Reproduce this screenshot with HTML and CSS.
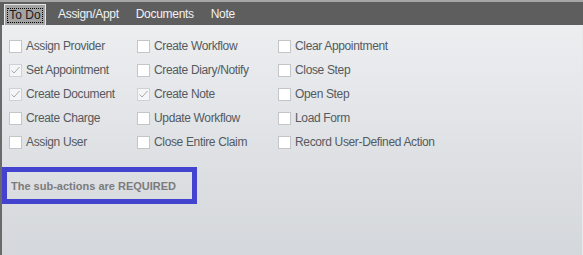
FILE: index.html
```html
<!DOCTYPE html>
<html>
<head>
<meta charset="utf-8">
<link rel="stylesheet" href="styles.css">
</head>
<body>
<div class="panel">
  <div class="tabs">
    <div class="tab active"><span class="focus">To Do</span></div>
    <div class="tab">Assign/Appt</div>
    <div class="tab">Documents</div>
    <div class="tab">Note</div>
  </div>
  <div class="body">
    <div class="grid">
      <label class="item"><span class="box"></span>Assign Provider</label>
      <label class="item"><span class="box"></span>Create Workflow</label>
      <label class="item"><span class="box"></span>Clear Appointment</label>

      <label class="item"><span class="box checked"><svg viewBox="0 0 13 13" width="13" height="13"><path d="M2.5 6.5 L5 9 L10.5 3" fill="none" stroke="#a9a9a9" stroke-width="1"/></svg></span>Set Appointment</label>
      <label class="item"><span class="box"></span>Create Diary/Notify</label>
      <label class="item"><span class="box"></span>Close Step</label>

      <label class="item"><span class="box checked"><svg viewBox="0 0 13 13" width="13" height="13"><path d="M2.5 6.5 L5 9 L10.5 3" fill="none" stroke="#a9a9a9" stroke-width="1"/></svg></span>Create Document</label>
      <label class="item"><span class="box checked"><svg viewBox="0 0 13 13" width="13" height="13"><path d="M2.5 6.5 L5 9 L10.5 3" fill="none" stroke="#a9a9a9" stroke-width="1"/></svg></span>Create Note</label>
      <label class="item"><span class="box"></span>Open Step</label>

      <label class="item"><span class="box"></span>Create Charge</label>
      <label class="item"><span class="box"></span>Update Workflow</label>
      <label class="item"><span class="box"></span>Load Form</label>

      <label class="item"><span class="box"></span>Assign User</label>
      <label class="item"><span class="box"></span>Close Entire Claim</label>
      <label class="item"><span class="box"></span>Record User-Defined Action</label>
    </div>
    <div class="note">The sub-actions are REQUIRED</div>
  </div>
</div>
</body>
</html>
```

FILE: styles.css
```css
html, body {
  margin: 0;
  padding: 0;
}
body {
  width: 583px;
  height: 255px;
  overflow: hidden;
  font-family: "Liberation Sans", Arial, sans-serif;
  font-size: 12px;
}
.panel {
  width: 583px;
  height: 255px;
  display: flex;
  flex-direction: column;
}
.tabs {
  height: 23px;
  border-top: 2px solid #a6a6a6;
  background: #5e5e5e;
  display: flex;
  align-items: flex-end;
  padding-left: 4px;
  box-sizing: content-box;
}
.tab {
  color: #f2f2f2;
  height: 21px;
  line-height: 21px;
  padding: 0 8px 0 9px;
  box-sizing: border-box;
  white-space: nowrap;
  letter-spacing: -0.3px;
}
.tab.active {
  width: 42px;
  background: #a3a3a3;
  border: 1px solid #e4e6e8;
  border-bottom: none;
  padding: 0;
  display: flex;
  align-items: center;
  justify-content: center;
  color: #1a1a1a;
  margin-right: 3px;
  letter-spacing: 0;
}
.focus {
  border: 1px dotted #000;
  padding: 0 1px;
  line-height: 13px;
}
.body {
  flex: 1;
  border-left: 2px solid #6a6a6a;
  border-right: 1px solid #e6e8ea;
  background: linear-gradient(#eceef0, #d4d7db);
  padding: 9px 0 0 7px;
  position: relative;
}
.grid {
  display: grid;
  grid-template-columns: 128px 141px 1fr;
  grid-auto-rows: 24px;
}
.item {
  display: flex;
  align-items: center;
  color: #555a60;
  white-space: nowrap;
  letter-spacing: -0.35px;
}
.box {
  width: 13px;
  height: 13px;
  box-sizing: border-box;
  border: 1px solid #c3c5c8;
  background: #ffffff;
  margin-right: 4px;
  flex: none;
  display: flex;
}
.box svg {
  margin: -1px;
}
.box.checked {
  background: #f4f5f6;
  border-color: #cfd1d4;
}
.note {
  margin: 13px 0 0 -7px;
  width: 195px;
  height: 37px;
  box-sizing: border-box;
  border: 5px solid #4343cf;
  padding: 0 0 0 4px;
  display: flex;
  align-items: center;
  font-size: 11px;
  font-weight: bold;
  color: #7b7b7b;
}
```
